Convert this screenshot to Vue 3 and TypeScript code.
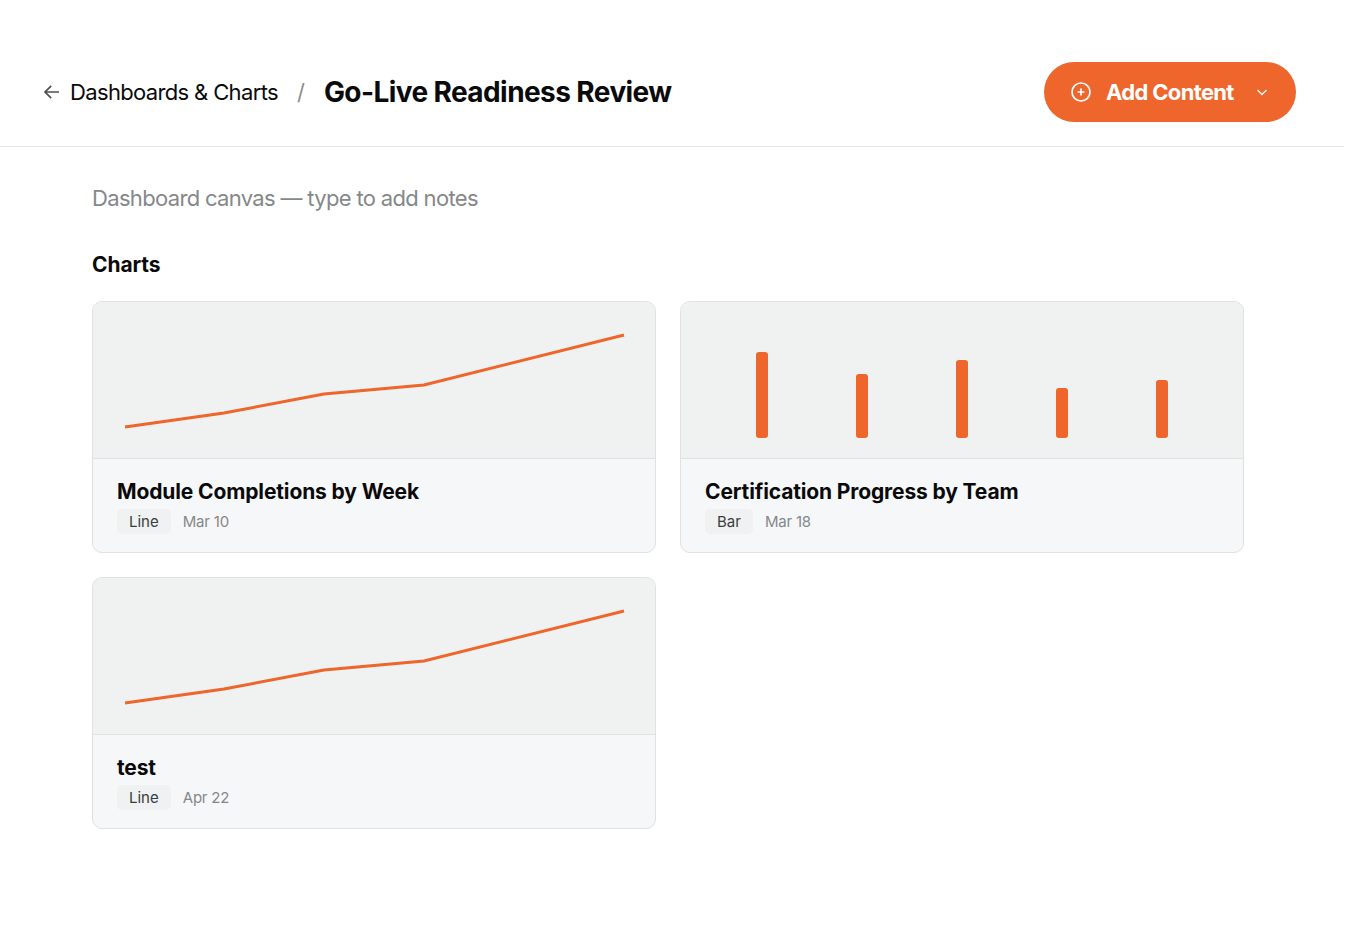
<script setup lang="ts">
interface Chart {
  title: string
  kind: "Line" | "Bar"
  date: string
}

const charts: Chart[] = [
  { title: "Module Completions by Week", kind: "Line", date: "Mar 10" },
  { title: "Certification Progress by Team", kind: "Bar", date: "Mar 18" },
  { title: "test", kind: "Line", date: "Apr 22" },
]

const linePoints = "32,125 131,111 231,92 331,83 531,33"
const barHeights = [86, 64, 78, 50, 58]
</script>

<template>
  <div class="page">
    <header class="topbar">
      <div class="crumbs">
        <svg class="back" width="18" height="18" viewBox="0 0 18 18" fill="none">
          <path d="M16 9H2M8.2 2.8L2 9L8.2 15.2" stroke="#4d5052" stroke-width="1.7" />
        </svg>
        <span class="crumbs_parent">Dashboards &amp; Charts</span>
        <span class="crumbs_sep">/</span>
        <h1 class="crumbs_title">Go-Live Readiness Review</h1>
      </div>
      <button class="add">
        <svg width="20" height="20" viewBox="0 0 20 20" fill="none">
          <circle cx="10" cy="10" r="9" stroke="#fff" stroke-width="1.7" />
          <path d="M10 6.5V13.5M6.5 10H13.5" stroke="#fff" stroke-width="1.7" />
        </svg>
        <span class="add_label">Add Content</span>
        <svg class="add_caret" width="12" height="12" viewBox="0 0 12 12" fill="none">
          <path d="M1.5 4L6 8.5L10.5 4" stroke="#fff" stroke-width="1.4" />
        </svg>
      </button>
    </header>

    <main class="content">
      <p class="notes">Dashboard canvas — type to add notes</p>
      <h2 class="section">Charts</h2>
      <div class="grid">
        <article v-for="chart in charts" :key="chart.title" class="card">
          <div class="preview">
            <svg v-if="chart.kind === 'Line'" class="line" width="562" height="156" viewBox="0 0 562 156" fill="none">
              <polyline :points="linePoints" stroke="#ee662b" stroke-width="3" />
            </svg>
            <div v-else class="bars">
              <span v-for="(h, i) in barHeights" :key="i" class="bar" :style="{ height: h + 'px' }"></span>
            </div>
          </div>
          <div class="info">
            <h3 class="info_title">{{ chart.title }}</h3>
            <div class="meta">
              <span class="tag">{{ chart.kind }}</span>
              <span class="date">{{ chart.date }}</span>
            </div>
          </div>
        </article>
      </div>
    </main>
  </div>
</template>

<style>
html,
body {
  background: #fff;
}
</style>

<style scoped>
.page {
  width: 1344px;
  min-height: 930px;
  font-family: Inter, "Liberation Sans", sans-serif;
  color: #0a0a0a;
}

.topbar {
  display: flex;
  align-items: center;
  justify-content: space-between;
  box-sizing: border-box;
  height: 147px;
  padding: 38px 48px 0 43px;
  border-bottom: 1px solid #e2e3e4;
}

.crumbs {
  display: flex;
  align-items: center;
}

.back {
  margin-right: 9px;
}

.crumbs_parent {
  font-size: 22px;
  letter-spacing: -0.65px;
}

.crumbs_sep {
  margin: 0 19px;
  font-size: 22px;
  color: #8a8d8f;
}

.crumbs_title {
  margin: 0;
  font-size: 28px;
  font-weight: 700;
  letter-spacing: -0.58px;
}

.add {
  display: flex;
  align-items: center;
  box-sizing: border-box;
  width: 252px;
  height: 60px;
  padding: 0 28px 0 27px;
  border: 0;
  border-radius: 30px;
  background: #ee662b;
  color: #fff;
  font-family: inherit;
}

.add_label {
  margin-left: 15px;
  font-size: 22px;
  font-weight: 700;
  letter-spacing: -0.66px;
}

.add_caret {
  margin-left: auto;
}

.content {
  padding: 36px 100px 0 92px;
}

.notes {
  margin: 0;
  font-size: 22px;
  line-height: 30px;
  letter-spacing: -0.67px;
  color: #85888a;
}

.section {
  margin: 37px 0 21px;
  font-size: 21px;
  line-height: 30px;
  font-weight: 700;
  letter-spacing: -0.1px;
}

.grid {
  display: grid;
  grid-template-columns: 564px 564px;
  gap: 24px;
}

.card {
  box-sizing: border-box;
  height: 252px;
  border: 1px solid #dfe1e3;
  border-radius: 10px;
  background: #f6f7f9;
  overflow: hidden;
}

.preview {
  box-sizing: border-box;
  height: 157px;
  border-bottom: 1px solid #dfe1e3;
  background: #f0f1f1;
}

.line {
  display: block;
}

.bars {
  display: flex;
  align-items: flex-end;
  justify-content: space-around;
  box-sizing: border-box;
  height: 156px;
  padding: 0 31px 20px;
}

.bar {
  width: 12px;
  border-radius: 3px;
  background: #ee662b;
}

.info {
  padding: 19px 24px 0;
}

.info_title {
  margin: 0;
  font-size: 21px;
  line-height: 28px;
  font-weight: 700;
  letter-spacing: -0.13px;
}

.meta {
  display: flex;
  align-items: center;
  gap: 12px;
  margin-top: 3px;
}

.tag {
  padding: 0 12px;
  border-radius: 5px;
  background: #f0f1f1;
  font-size: 15px;
  line-height: 25px;
  color: #3a3d3f;
}

.date {
  font-size: 15px;
  letter-spacing: -0.2px;
  color: #85888a;
}
</style>
